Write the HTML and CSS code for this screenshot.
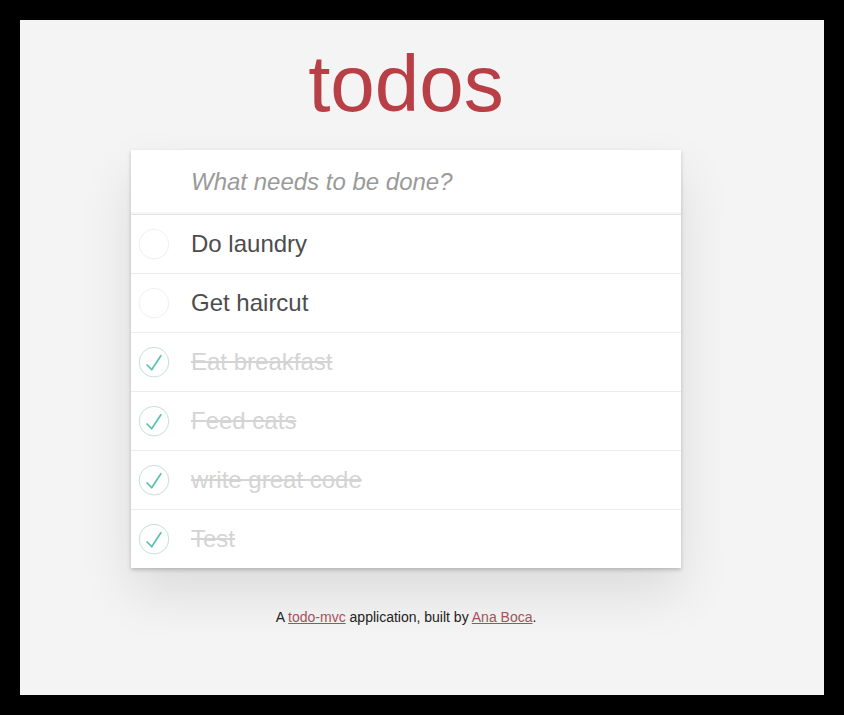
FILE: index.html
```html
<!DOCTYPE html>
<html lang="en">
<head>
<meta charset="utf-8">
<title>todos</title>
<link rel="stylesheet" href="styles.css">
</head>
<body>
<div class="frame">
  <div class="page">
    <h1 class="title">todos</h1>
    <section class="todoapp">
      <header class="header">
        <input class="new-todo" type="text" placeholder="What needs to be done?">
      </header>
      <ul class="todo-list">
        <li class="todo">
          <span class="toggle"><svg width="40" height="40" viewBox="-10 -18 100 135"><circle cx="50" cy="50" r="50" fill="none" stroke="#ededed" stroke-width="3"/></svg></span>
          <label class="label">Do laundry</label>
        </li>
        <li class="todo">
          <span class="toggle"><svg width="40" height="40" viewBox="-10 -18 100 135"><circle cx="50" cy="50" r="50" fill="none" stroke="#ededed" stroke-width="3"/></svg></span>
          <label class="label">Get haircut</label>
        </li>
        <li class="todo completed">
          <span class="toggle"><svg width="40" height="40" viewBox="-10 -18 100 135"><circle cx="50" cy="50" r="50" fill="none" stroke="#bddad5" stroke-width="3"/><path fill="#5dc2af" d="M72 25L42 71 27 56l-4 4 20 20 34-52z"/></svg></span>
          <label class="label">Eat breakfast</label>
        </li>
        <li class="todo completed">
          <span class="toggle"><svg width="40" height="40" viewBox="-10 -18 100 135"><circle cx="50" cy="50" r="50" fill="none" stroke="#bddad5" stroke-width="3"/><path fill="#5dc2af" d="M72 25L42 71 27 56l-4 4 20 20 34-52z"/></svg></span>
          <label class="label">Feed cats</label>
        </li>
        <li class="todo completed">
          <span class="toggle"><svg width="40" height="40" viewBox="-10 -18 100 135"><circle cx="50" cy="50" r="50" fill="none" stroke="#bddad5" stroke-width="3"/><path fill="#5dc2af" d="M72 25L42 71 27 56l-4 4 20 20 34-52z"/></svg></span>
          <label class="label">write great code</label>
        </li>
        <li class="todo completed">
          <span class="toggle"><svg width="40" height="40" viewBox="-10 -18 100 135"><circle cx="50" cy="50" r="50" fill="none" stroke="#bddad5" stroke-width="3"/><path fill="#5dc2af" d="M72 25L42 71 27 56l-4 4 20 20 34-52z"/></svg></span>
          <label class="label">Test</label>
        </li>
      </ul>
    </section>
    <footer class="info">A <a href="#">todo-mvc</a> application, built by <a href="#">Ana Boca</a>.</footer>
  </div>
</div>
</body>
</html>
```
FILE: styles.css
```css
html, body {
  margin: 0;
  padding: 0;
}
body {
  background: #000;
  font-family: "Liberation Sans", Arial, sans-serif;
}
.frame {
  padding: 20px;
  height: 715px;
  box-sizing: border-box;
}
.page {
  background: #f4f4f4;
  height: 675px;
  padding: 18px 32px 0 0;
  box-sizing: border-box;
  display: flex;
  flex-direction: column;
  align-items: center;
  overflow: hidden;
}
.title {
  margin: 0 0 20px;
  font-size: 80px;
  line-height: 92px;
  font-weight: normal;
  color: #b83f45;
  text-align: center;
}
.todoapp {
  width: 550px;
  background: #fff;
  box-shadow: 0 2px 4px 0 rgba(0, 0, 0, 0.2), 0 25px 50px 0 rgba(0, 0, 0, 0.1);
}
.header {
  height: 64px;
  border-bottom: 1px solid #e3e3e3;
  box-shadow: inset 0 -2px 1px rgba(0, 0, 0, 0.03);
  display: flex;
}
.new-todo {
  flex: 1;
  border: none;
  outline: none;
  background: transparent;
  padding: 0 16px 0 60px;
  font-family: inherit;
  font-size: 24px;
  color: #4d4d4d;
}
.new-todo::placeholder {
  font-style: italic;
  color: #9a9a9a;
}
.todo-list {
  list-style: none;
  margin: 0;
  padding: 0;
}
.todo {
  height: 58px;
  border-bottom: 1px solid #ededed;
  display: flex;
  align-items: center;
  font-size: 24px;
}
.todo:last-child {
  border-bottom: none;
}
.toggle {
  width: 40px;
  height: 40px;
  display: block;
  flex: none;
}
.toggle svg {
  display: block;
}
.label {
  padding-left: 20px;
  line-height: 1.2;
  color: #4d4d4d;
}
.completed .label {
  color: #d4d4d4;
  text-decoration: line-through;
}
.info {
  margin-top: 40px;
  font-size: 14px;
  line-height: 19.6px;
  color: #222;
  text-align: center;
}
.info a {
  color: #a4525a;
  text-decoration: underline;
}
```
